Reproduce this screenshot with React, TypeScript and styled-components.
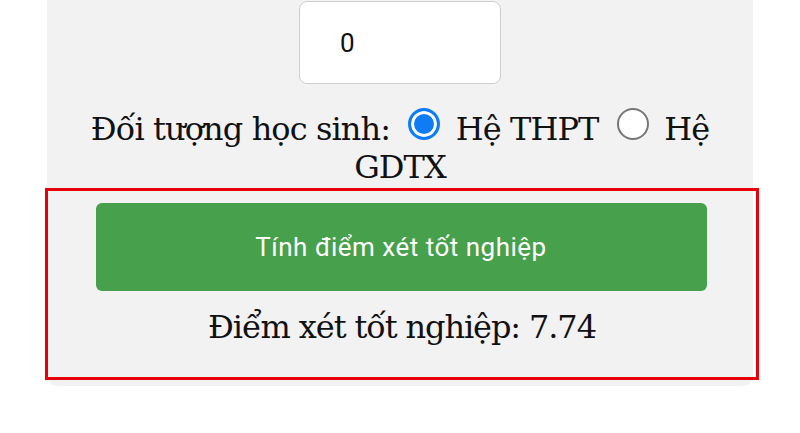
import React from "react";
import styled, { createGlobalStyle } from "styled-components";

const GlobalStyle = createGlobalStyle`
  html, body {
    margin: 0;
    padding: 0;
    background: #ffffff;
  }
  * {
    box-sizing: border-box;
  }
`;

const Page = styled.div`
  width: 800px;
  height: 433px;
  overflow: hidden;
  padding: 0 47px;
`;

const Card = styled.main`
  background: #f2f2f3;
  border-radius: 0 0 10px 10px;
  padding: 1px 0 6px;
  display: flex;
  flex-direction: column;
  align-items: center;
`;

const ScoreInput = styled.input`
  width: 202px;
  height: 83px;
  border: 1px solid #cfcfcf;
  border-radius: 8px;
  background: #ffffff;
  padding: 0 0 0 40px;
  font-family: Roboto, "Noto Sans", sans-serif;
  font-size: 26px;
  color: #111;
  outline: none;
`;

const Group = styled.div`
  width: 640px;
  margin-top: 24px;
  text-align: center;
  font-family: "DejaVu Serif", "Liberation Serif", serif;
  font-size: 32px;
  letter-spacing: -0.9px;
  line-height: 38px;
  color: #111;
`;

const Radio = styled.input`
  appearance: none;
  -webkit-appearance: none;
  width: 32px;
  height: 32px;
  margin: 0 6px 0 9px;
  vertical-align: baseline;
  border-radius: 50%;
  border: 2px solid #767676;
  background: #ffffff;

  &:checked {
    border: 3px solid #0f7cf6;
    background: #0f7cf6;
    box-shadow: inset 0 0 0 3px #ffffff;
  }
`;

const Frame = styled.section`
  align-self: stretch;
  margin: 2px -6px 0 -2px;
  border: 3px solid #e5000b;
  padding: 12px 0 31px;
  display: flex;
  flex-direction: column;
  align-items: center;
`;

const CalcButton = styled.button`
  width: 611px;
  height: 88px;
  margin-left: -2px;
  border: none;
  border-radius: 6px;
  background: #47a04b;
  color: #ffffff;
  font-family: Roboto, "Noto Sans", sans-serif;
  font-size: 26px;
  letter-spacing: 0.5px;
  cursor: pointer;
`;

const Result = styled.p`
  margin: 17px 0 0;
  font-family: "DejaVu Serif", "Liberation Serif", serif;
  font-size: 32px;
  letter-spacing: -1.1px;
  line-height: 38px;
  color: #111;
`;

export default function App() {
  return (
    <>
      <GlobalStyle />
      <Page>
        <Card>
          <ScoreInput type="number" defaultValue="0" />
          <Group>
            Đối tượng học sinh:{" "}
            <Radio type="radio" name="doituong" defaultChecked />{" "}
            Hệ THPT{" "}
            <Radio type="radio" name="doituong" />{" "}
            Hệ GDTX
          </Group>
          <Frame>
            <CalcButton>Tính điểm xét tốt nghiệp</CalcButton>
            <Result>Điểm xét tốt nghiệp: 7.74</Result>
          </Frame>
        </Card>
      </Page>
    </>
  );
}
